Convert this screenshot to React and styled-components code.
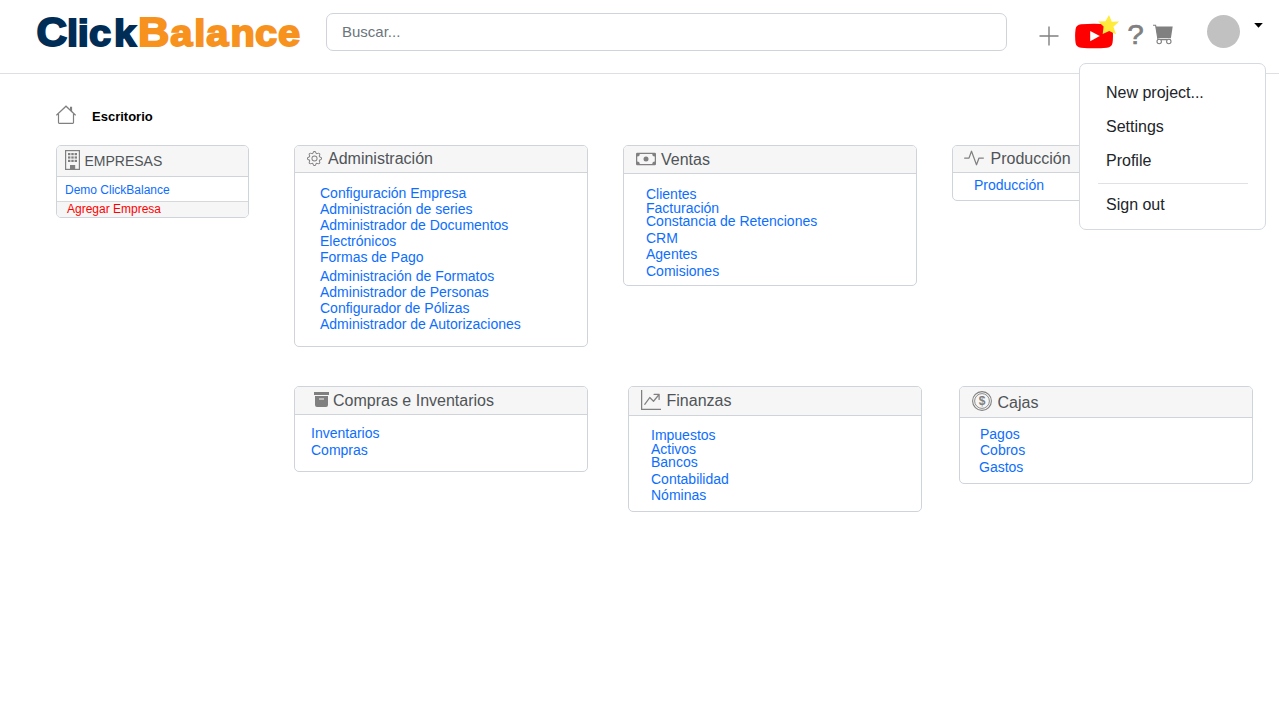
import React from "react";
import styled, { createGlobalStyle } from "styled-components";
import {
  BsGear,
  BsCash,
  BsActivity,
  BsGraphUpArrow,
} from "react-icons/bs";

const GlobalStyle = createGlobalStyle`
  * { box-sizing: border-box; }
  body {
    margin: 0;
    background: #fff;
    color: #212529;
    font-family: "Liberation Sans", Arial, sans-serif;
    overflow: hidden;
  }
  svg { display: block; flex: none; }
`;

const Page = styled.div`
  width: 1280px;
  height: 720px;
  position: relative;
`;

const TopBar = styled.header`
  display: flex;
  align-items: flex-start;
  width: 1279px;
  height: 74px;
  padding-left: 34px;
  border-bottom: 1px solid #dcdfe4;
`;

const Logo = styled.svg`
  margin-top: 8px;
  font-weight: 800;
  font-size: 37.5px;
  text-anchor: middle;
  stroke-width: 1.9px;
`;

const Search = styled.input`
  width: 681px;
  height: 38px;
  margin: 13px 0 0 18px;
  padding: 0 15px 2px;
  border: 1px solid #ced4da;
  border-radius: 7px;
  outline: none;
  font: 15px "Liberation Sans", Arial, sans-serif;
  &::placeholder { color: #6c757d; opacity: 1; }
`;

const Action = styled.div`
  flex: none;
  margin-left: ${(p) => p.$gap}px;
  margin-top: ${(p) => p.$top}px;
  color: #808080;
`;

const Avatar = styled(Action)`
  width: 33px;
  height: 33px;
  border-radius: 50%;
  background: #c1c1c1;
`;

const Crumb = styled.div`
  display: flex;
  height: 71px;
  padding: 31px 0 0 56px;
  color: #808080;
`;

const CrumbLabel = styled.h1`
  margin: 4px 0 0 16px;
  font-size: 13px;
  line-height: 15px;
  color: #000;
`;

const Row = styled.div`
  display: flex;
  align-items: flex-start;
  height: 241px;
  padding-left: ${(p) => p.$left}px;
`;

const Card = styled.section`
  flex: none;
  width: ${(p) => p.$w || 294}px;
  height: ${(p) => p.$h}px;
  margin-right: ${(p) => p.$after || 0}px;
  border: 1px solid #ced4da;
  border-radius: 5px;
  overflow: hidden;
  background: #fff;
`;

const CardHead = styled.div`
  display: flex;
  height: ${(p) => p.$h}px;
  padding-left: ${(p) => p.$left}px;
  background: #f6f6f6;
  border-bottom: 1px solid #ced4da;
  color: #808080;
`;

const IconSlot = styled.span`
  display: block;
  flex: none;
  margin-top: ${(p) => p.$top}px;
`;

const Title = styled.h2`
  margin: ${(p) => p.$top}px 0 0 ${(p) => p.$gap}px;
  font-size: ${(p) => p.$size || 16}px;
  line-height: 18px;
  font-weight: normal;
  color: #505458;
`;

const Links = styled.nav`
  display: flex;
  flex-direction: column;
  padding: ${(p) => p.$top}px 0 0 ${(p) => p.$left}px;
`;

const LinkItem = styled.a`
  height: ${(p) => p.$step}px;
  margin-left: ${(p) => p.$shift || 0}px;
  font-size: 14px;
  line-height: 16px;
  white-space: nowrap;
  color: #0d6efd;
`;

const Company = styled.a`
  display: block;
  height: 24px;
  padding: 6px 0 0 8px;
  font-size: 12px;
  line-height: 14px;
  color: #0d6efd;
`;

const AddCompany = styled.a`
  display: block;
  height: 16px;
  padding-left: 10px;
  border-top: 1px solid #d5d9dc;
  background: #f6f6f6;
  font-size: 12px;
  line-height: 14px;
  color: #f00;
`;

const Menu = styled.div`
  position: absolute;
  left: 1079px;
  top: 63px;
  width: 187px;
  height: 167px;
  padding: 12px 17px 0 18px;
  border: 1px solid #d5d9e0;
  border-radius: 7px;
  background: #fff;
`;

const MenuItem = styled.div`
  height: 34px;
  padding-left: 8px;
  font-size: 16px;
  line-height: 34px;
  color: #212529;
`;

const Divider = styled.div`
  height: 1px;
  margin: 5px 0 4px;
  background: #dee2e6;
`;

const LOGO_STRETCH = 1.06;
const logoX = (centres) => centres.map((c) => (c / LOGO_STRETCH).toFixed(1)).join(" ");

const BrandLogo = () => (
  <Logo width="274" height="50" viewBox="0 0 274 50">
    <g transform={`scale(${LOGO_STRETCH} 1)`}>
      <text x={logoX([17.8, 38.6, 49.4, 66, 91.2])} y="37.8" fill="#002d56" stroke="#002d56">
        <tspan fontSize="40">C</tspan>lick
      </text>
      <text x={logoX([119.8, 147.2, 165.7, 183.4, 208.7, 232, 255])} y="37.8" fill="#f7921e" stroke="#f7921e">
        <tspan fontSize="41">B</tspan>alance
      </text>
    </g>
  </Logo>
);

const HouseIcon = () => (
  <svg width="20" height="20" viewBox="0 0 20 20" fill="none" stroke="currentColor" strokeWidth="1.2">
    <path d="M.4 10.3 10 1.2l9.6 9.1M2.5 9v8.6q0 .8.8.8h13.4q.8 0 .8-.8V9" />
    <path d="M14 1.8h2.1v5.4L14 5.4Z" fill="currentColor" stroke="none" />
  </svg>
);

const windowsX = [3, 6.3, 9.6];
const windowsY = [3, 6.4, 9.8];

const BuildingIcon = () => (
  <svg width="15" height="20" viewBox="0 0 15 20" fill="currentColor">
    <rect x=".6" y=".6" width="13.8" height="18.8" fill="none" stroke="currentColor" strokeWidth="1.2" />
    {windowsY.map((y) => windowsX.map((x) => (
      <rect key={`${x}-${y}`} x={x} y={y} width="2.4" height="2.2" />
    )))}
    <rect x="5" y="15" width="5.2" height="5" />
  </svg>
);

const BoxIcon = () => (
  <svg width="15" height="15" viewBox="0 0 15 15" fill="currentColor">
    <path d="M0 0h15v3H0ZM1 4h13v9q0 2-2 2H3q-2 0-2-2Z" />
    <path d="M5 7h5" stroke="#f6f6f6" strokeWidth="1" />
  </svg>
);

const CoinIcon = () => (
  <svg width="20" height="20" viewBox="0 0 20 20" fill="none" stroke="currentColor">
    <circle cx="10" cy="10" r="9.4" strokeWidth="1.1" />
    <circle cx="10" cy="10" r="7.4" strokeWidth="0.9" />
    <text x="10" y="14.2" textAnchor="middle" fontSize="12" fontWeight="bold" fill="currentColor" stroke="none">$</text>
  </svg>
);

const PlusIcon = () => (
  <svg width="20" height="20" viewBox="0 0 20 20" stroke="currentColor" strokeWidth="1.4">
    <path d="M.5 10h19M10 .5v19" />
  </svg>
);

const VideoIcon = () => (
  <svg width="45" height="34" viewBox="0 0 45 34">
    <path fill="#f00" d="M6 9.3Q19 8.2 32 9.3C35 9.5 37 11.2 37.5 14Q38.5 21 37.5 28C37 31 35 32.4 32 32.7Q19 33.8 6 32.7C3 32.4 1 31 .6 28Q-.4 21 .6 14C1 11.2 3 9.5 6 9.3Z" />
    <path fill="#fff" d="M15.2 16v10.2l9.6-5.1Z" />
    <path fill="#ffeb3b" d="m34 0 2.8 6.7 7.3-.1-5.7 5.2 2.7 7.4-6.9-3.2-6.5 3 .9-7.4-5.4-5 7.2-.3Z" />
  </svg>
);

const HelpIcon = () => (
  <svg width="17" height="32" viewBox="0 -5 17 32" fill="currentColor" stroke="currentColor" strokeWidth="0.7">
    <text x="0.4" y="21.6" fontSize="27.5" textLength="16.2" lengthAdjust="spacingAndGlyphs">?</text>
  </svg>
);

const CartIcon = () => (
  <svg width="21" height="21" viewBox="0 0 21 21" fill="none" stroke="currentColor">
    <path d="M0 1.2h2.6l2.4 14.4h12.6" strokeWidth="1.1" />
    <path d="M2.7 2.4h17l-1.8 11.8H4.8Z" fill="currentColor" stroke="none" />
    <circle cx="6.2" cy="17.5" r="2.2" fill="#fff" strokeWidth="1.1" />
    <circle cx="15.8" cy="17.5" r="2.2" fill="#fff" strokeWidth="1.1" />
  </svg>
);

const CaretIcon = () => (
  <svg width="9" height="5" viewBox="0 0 9 5">
    <path d="M.2.1h8.6L4.5 4.7Z" fill="#000" />
  </svg>
);

function Module({ title, icon, iconTop, titleTop, gap, headHeight, headLeft, top, left, links, h, after }) {
  return (
    <Card $h={h} $after={after}>
      <CardHead $h={headHeight} $left={headLeft}>
        <IconSlot $top={iconTop}>{icon}</IconSlot>
        <Title $top={titleTop} $gap={gap}>{title}</Title>
      </CardHead>
      <Links $top={top} $left={left}>
        {links.map(([label, step, shift]) => (
          <LinkItem key={label} $step={step} $shift={shift}>{label}</LinkItem>
        ))}
      </Links>
    </Card>
  );
}

const firstRow = [
  {
    title: "Administración", icon: <BsGear size={15} />, iconTop: 5, titleTop: 4, gap: 6,
    headHeight: 27, headLeft: 12, top: 12, left: 25, h: 202, after: 35,
    links: [
      ["Configuración Empresa", 16], ["Administración de series", 16],
      ["Administrador de Documentos", 16], ["Electrónicos", 16], ["Formas de Pago", 19],
      ["Administración de Formatos", 16], ["Administrador de Personas", 16],
      ["Configurador de Pólizas", 16], ["Administrador de Autorizaciones", 16],
    ],
  },
  {
    title: "Ventas", icon: <BsCash size={20} />, iconTop: 3, titleTop: 5, gap: 5,
    headHeight: 28, headLeft: 12, top: 12, left: 22, h: 141, after: 35,
    links: [
      ["Clientes", 14], ["Facturación", 13], ["Constancia de Retenciones", 17],
      ["CRM", 16], ["Agentes", 17], ["Comisiones", 16],
    ],
  },
  {
    title: "Producción", icon: <BsActivity size={20} />, iconTop: 2, titleTop: 4, gap: 6.5,
    headHeight: 27, headLeft: 11, top: 4, left: 21, h: 56,
    links: [["Producción", 16]],
  },
];

const secondRow = [
  {
    title: "Compras e Inventarios", icon: <BoxIcon />, iconTop: 5, titleTop: 5, gap: 4,
    headHeight: 28, headLeft: 19, top: 10, left: 16, h: 86, after: 40,
    links: [["Inventarios", 17], ["Compras", 16]],
  },
  {
    title: "Finanzas", icon: <BsGraphUpArrow size={20} />, iconTop: 3, titleTop: 5, gap: 5.5,
    headHeight: 29, headLeft: 12, top: 11, left: 22, h: 126, after: 37,
    links: [["Impuestos", 14], ["Activos", 13], ["Bancos", 17], ["Contabilidad", 16], ["Nóminas", 16]],
  },
  {
    title: "Cajas", icon: <CoinIcon />, iconTop: 4, titleTop: 7, gap: 5.5,
    headHeight: 31, headLeft: 12, top: 8, left: 20, h: 98,
    links: [["Pagos", 16], ["Cobros", 17], ["Gastos", 16, -1]],
  },
];

export default function App() {
  return (
    <Page>
      <GlobalStyle />
      <TopBar>
        <BrandLogo />
        <Search placeholder="Buscar..." />
        <Action $gap={32} $top={26}><PlusIcon /></Action>
        <Action $gap={16} $top={15}><VideoIcon /></Action>
        <Action $gap={7} $top={17}><HelpIcon /></Action>
        <Action $gap={9} $top={24}><CartIcon /></Action>
        <Avatar $gap={33} $top={15} />
        <Action $gap={14} $top={23}><CaretIcon /></Action>
      </TopBar>
      <Crumb>
        <HouseIcon />
        <CrumbLabel>Escritorio</CrumbLabel>
      </Crumb>
      <Row $left={56}>
        <Card $w={193} $h={73} $after={45}>
          <CardHead $h={31} $left={8}>
            <IconSlot $top={4}><BuildingIcon /></IconSlot>
            <Title $size={14} $top={6} $gap={4.5}>EMPRESAS</Title>
          </CardHead>
          <Company>Demo ClickBalance</Company>
          <AddCompany>Agregar Empresa</AddCompany>
        </Card>
        {firstRow.map((m) => <Module key={m.title} {...m} />)}
      </Row>
      <Row $left={294}>
        {secondRow.map((m) => <Module key={m.title} {...m} />)}
      </Row>
      <Menu>
        <MenuItem>New project...</MenuItem>
        <MenuItem>Settings</MenuItem>
        <MenuItem>Profile</MenuItem>
        <Divider />
        <MenuItem>Sign out</MenuItem>
      </Menu>
    </Page>
  );
}
